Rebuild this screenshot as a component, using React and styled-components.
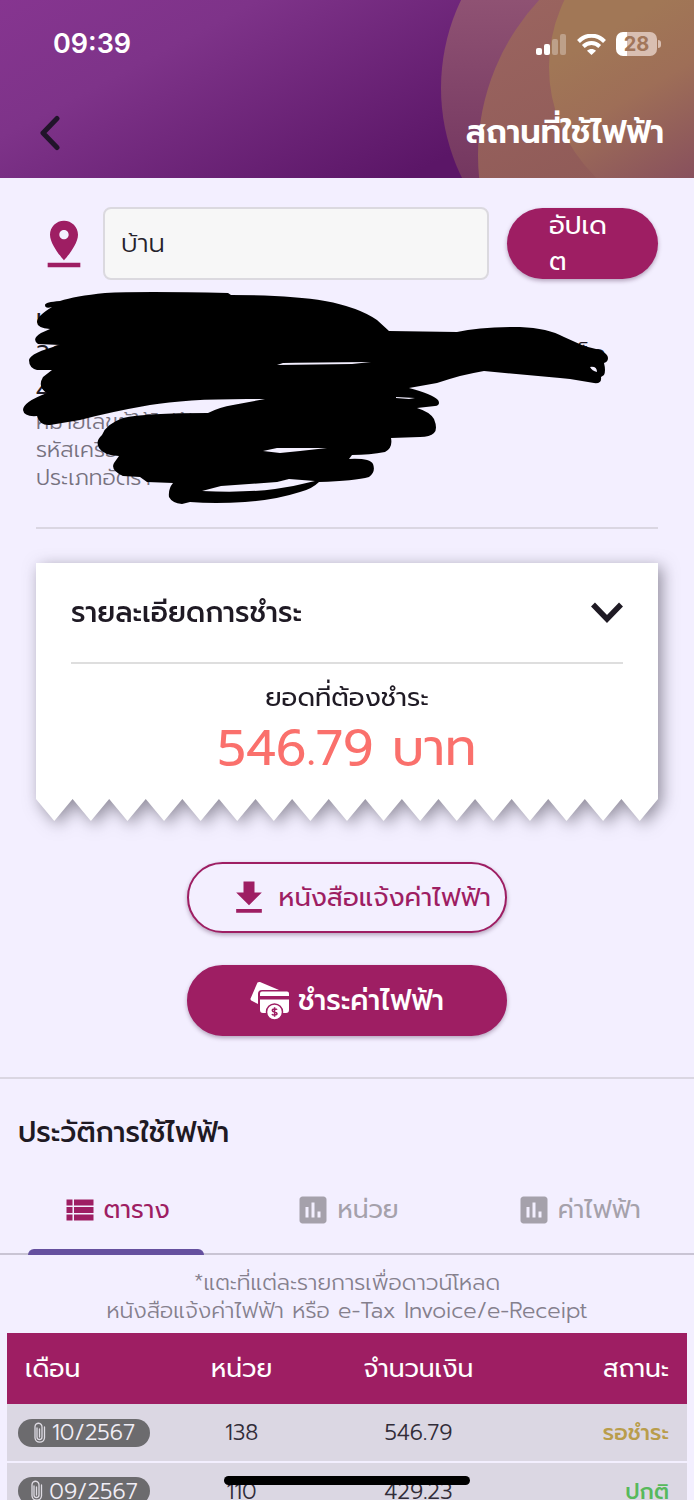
import React, { useState } from "react";
import styled, { createGlobalStyle } from "styled-components";

const plum = "#9e1e63";
const ink = "#1f1a24";

const GlobalStyle = createGlobalStyle`
  *, *::before, *::after { box-sizing: border-box; }
  body { margin: 0; background: #f3efff; }
  body, button, input, table {
    font-family: Prompt, Kanit, "Noto Sans Thai", "Noto Sans Thai Looped", "Noto Sans", "Open Sans", sans-serif;
  }
  button { border: 0; padding: 0; background: none; color: inherit; cursor: pointer; }
  h1, h2, p { margin: 0; }
`;

const Screen = styled.div`
  display: flex;
  flex-direction: column;
  height: 100vh;
  overflow-y: auto;
  scrollbar-width: none;
  color: ${ink};
  background: #f3efff;
`;

const Header = styled.header`
  position: relative;
  flex: none;
  height: 178px;
  color: #fff;
  background: linear-gradient(152deg, #863590 0%, #7e3389 25%, #5b1667 72%, #5b1667 100%);
`;

const HeaderArt = styled.svg`
  position: absolute;
  inset: 0;
  width: 100%;
  height: 100%;
`;

const StatusBar = styled.div`
  position: relative;
  display: flex;
  align-items: center;
  justify-content: space-between;
  height: 88px;
  padding: 0 33px 0 53px;
`;

const Clock = styled.time`
  font: 600 27px/32px Inter, sans-serif;
`;

const StatusIcons = styled.div`
  display: flex;
  align-items: center;
  gap: 10px;
`;

const Battery = styled.span`
  display: flex;
  align-items: center;
  gap: 1px;
`;

const BatteryBody = styled.span`
  width: 41px;
  height: 24px;
  border-radius: 7px;
  text-align: center;
  font: 700 20px/24px Inter, sans-serif;
  color: #a2765a;
  background: linear-gradient(90deg, #fff 28%, #d9bfb2 28%);
`;

const BatteryTip = styled.span`
  width: 3px;
  height: 8px;
  border-radius: 0 3px 3px 0;
  background: #d9bfb2;
`;

const TitleBar = styled.div`
  position: relative;
  display: flex;
  align-items: center;
  justify-content: space-between;
  height: 90px;
  padding: 0 30px 0 36px;
`;

const BackButton = styled.button`
  display: flex;
  color: #21142a;
`;

const Title = styled.h1`
  font-size: 32px;
  line-height: 40px;
  font-weight: 600;
`;

const Place = styled.section`
  flex: none;
  padding: 29px 36px 0;
`;

const NameForm = styled.form`
  display: flex;
  align-items: center;
  gap: 18px;
`;

const NameField = styled.label`
  display: flex;
  flex: 1;
  align-items: center;
  gap: 11px;
  min-width: 0;
  color: ${plum};
  svg { flex: none; }
`;

const NameInput = styled.input`
  flex: 1;
  min-width: 0;
  height: 73px;
  padding: 0 16px;
  border: 2px solid #dbd9df;
  border-radius: 8px;
  background: #f7f7f7;
  color: #26222b;
  font-size: 26px;
  font-weight: 300;
`;

const UpdateButton = styled.button`
  width: 151px;
  height: 71px;
  padding: 0 42px;
  border-radius: 36px;
  background: ${plum};
  color: #fff;
  font-size: 26px;
  line-height: 36px;
  text-align: left;
  box-shadow: 0 2px 4px rgba(60, 20, 60, 0.35);
`;

const Address = styled.div`
  position: relative;
  margin-top: 20px;
  padding-bottom: 35px;
  border-bottom: 2px solid #dad6e2;
`;

const AddressLine = styled.p`
  display: flex;
  justify-content: space-between;
  width: 570px;
  max-width: 100%;
  height: 36px;
  font-size: 24px;
  line-height: 36px;
  font-weight: 400;
`;

const MeterLine = styled.p`
  height: 28px;
  font-size: 22px;
  line-height: 28px;
  font-weight: 300;
  color: #77727f;
`;

const Scribble = styled.svg`
  position: absolute;
  top: -15px;
  left: -16px;
  width: 600px;
  height: 225px;
`;

const Receipt = styled.div`
  margin-top: 34px;
  filter: drop-shadow(4px 4px 8px rgba(50, 45, 60, 0.5));
`;

const ReceiptBody = styled.div`
  display: flex;
  flex-direction: column;
  height: 236px;
  padding: 0 35px;
  background: #fff;
`;

const ReceiptEdge = styled.svg`
  display: block;
  width: 100%;
  height: 22px;
  fill: #fff;
`;

const ReceiptToggle = styled.button`
  display: flex;
  align-items: center;
  justify-content: space-between;
  height: 101px;
  flex: none;
  border-bottom: 2px solid #dedede;
  font-size: 28px;
  font-weight: 500;
`;

const DueLabel = styled.p`
  padding-top: 16px;
  font-size: 26px;
  line-height: 36px;
  text-align: center;
`;

const DueAmount = styled.p`
  font-size: 50px;
  line-height: 64px;
  text-align: center;
  color: #fa706c;
`;

const Actions = styled.div`
  display: flex;
  flex: none;
  flex-direction: column;
  align-items: center;
  gap: 32px;
  padding: 41px 0;
  border-bottom: 2px solid #dad6e2;
`;

const PillButton = styled.button`
  display: flex;
  align-items: center;
  justify-content: ${(p) => (p.$outlined ? "flex-end" : "center")};
  gap: 8px;
  width: 320px;
  height: 71px;
  padding: 0 14px;
  border: 2px solid ${plum};
  border-radius: 36px;
  background: ${(p) => (p.$outlined ? "#f3efff" : plum)};
  color: ${(p) => (p.$outlined ? plum : "#fff")};
  font-size: ${(p) => (p.$outlined ? 26 : 28)}px;
  font-weight: ${(p) => (p.$outlined ? 400 : 500)};
  white-space: nowrap;
  box-shadow: 0 2px 4px rgba(60, 20, 60, 0.35);
`;

const History = styled.section`
  flex: none;
`;

const HistoryTitle = styled.h2`
  padding: 34px 18px 0;
  font-size: 28px;
  line-height: 40px;
  font-weight: 500;
`;

const Tabs = styled.div`
  display: grid;
  grid-template-columns: repeat(3, 1fr);
  margin-top: 14px;
  border-bottom: 2px solid #c9c4d4;
`;

const Tab = styled.button`
  position: relative;
  display: flex;
  align-items: center;
  justify-content: center;
  gap: 6px;
  height: 86px;
  font-size: 25px;
  color: ${(p) => (p.$active ? plum : "#a5a1ab")};
  &::after {
    content: "";
    position: absolute;
    left: 12%;
    right: 12%;
    bottom: -2px;
    height: 6px;
    border-radius: 6px 6px 0 0;
    background: ${(p) => (p.$active ? "#65509f" : "transparent")};
  }
`;

const Note = styled.p`
  padding: 14px 18px 8px;
  font-size: 22px;
  line-height: 28px;
  font-weight: 300;
  text-align: center;
  color: #85808d;
`;

const TableWrap = styled.div`
  padding: 0 7px;
`;

const Table = styled.table`
  width: 100%;
  table-layout: fixed;
  border-collapse: collapse;
  font-size: 22px;
`;

const Head = styled.th`
  width: ${(p) => p.$width};
  height: 71px;
  padding: 0 18px;
  background: ${plum};
  color: #fff;
  font-size: 25px;
  font-weight: 400;
  text-align: ${(p) => p.$align};
`;

const Cell = styled.td`
  height: 58px;
  padding: ${(p) => (p.$month ? "0 11px" : "0 18px")};
  border-bottom: 2px solid #f3efff;
  background: #dbd7e3;
  color: ${(p) => p.$color || "#322d39"};
  font-weight: ${(p) => (p.$color ? 500 : 300)};
  text-align: ${(p) => p.$align};
`;

const MonthPill = styled.button`
  display: flex;
  align-items: center;
  justify-content: center;
  gap: 6px;
  width: 132px;
  height: 28px;
  border-radius: 14px;
  background: #6c6b6e;
  color: #f0edf5;
  font-size: 22px;
  font-weight: 300;
`;

const HomeIndicator = styled.div`
  position: fixed;
  bottom: 15px;
  left: 50%;
  width: 246px;
  height: 9px;
  margin-left: -123px;
  border-radius: 5px;
  background: #000;
`;

const Icon = ({ d, size, ...rest }) => (
  <svg width={size} height={size} viewBox="0 0 24 24" fill="currentColor" aria-hidden="true" {...rest}>
    <path d={d} />
  </svg>
);

const icons = {
  pin: "M18 8c0-3.31-2.69-6-6-6S6 4.69 6 8c0 4.5 6 11 6 11s6-6.5 6-11zm-8 0c0-1.1.9-2 2-2s2 .9 2 2-.89 2-2 2c-1.1 0-2-.9-2-2zM5 20v2h14v-2H5z",
  download: "M19 9h-4V3H9v6H5l7 7 7-7zM5 18v2h14v-2H5z",
  list: "M3 9h4V5H3zm0 5h4v-4H3zm0 5h4v-4H3zm5-5h13v-4H8zm0 5h13v-4H8zM8 5v4h13V5z",
  chart: "M19 3H5c-1.1 0-2 .9-2 2v14c0 1.1.9 2 2 2h14c1.1 0 2-.9 2-2V5c0-1.1-.9-2-2-2zM9 17H7v-7h2v7zm4 0h-2V7h2v10zm4 0h-2v-4h2v4z",
};

const SignalIcon = () => (
  <svg width="31" height="21" viewBox="0 0 31 21" fill="#fff" aria-hidden="true">
    <rect x="0" y="14" width="6" height="7" rx="2" />
    <rect x="8" y="10" width="6" height="11" rx="2" />
    <rect x="16" y="5" width="6" height="16" rx="2" opacity=".3" />
    <rect x="24" y="0" width="6" height="21" rx="2" opacity=".3" />
  </svg>
);

const WifiIcon = () => (
  <svg width="29" height="21" viewBox="0 0 29 21" fill="none" stroke="#fff" strokeWidth="4" aria-hidden="true">
    <path d="M1.500 7.500C9-.3 20-.3 27.500 7.500" />
    <path d="M6.300 12.500c4.800-4.600 11.600-4.600 16.400 0" />
    <path d="M10 16.700c2.500-2.400 6.500-2.400 9 0L14.500 21z" fill="#fff" stroke="none" />
  </svg>
);

const CardsIcon = () => (
  <svg width="40" height="40" viewBox="0 0 40 40" aria-hidden="true">
    <path d="M7.500 1.500Q8.600.6 10 1L29 9H12q-4 0-4 4v10L1.200 19.500Q0 18.500.8 17z" fill="#fff" />
    <path d="M12 10.500h25q2 0 2 2V15H10v-2.500q0-2 2-2zM10 18.500h29V29q0 3-3 3H13q-3 0-3-3z" fill="#fff" />
    <circle cx="24.500" cy="31" r="8" fill="#fff" stroke={plum} strokeWidth="1.500" />
    <path d="M27 28.800c-.4-1.100-4.700-1.500-4.700.6 0 2.200 4.700.9 4.700 3.200 0 2.100-4.600 1.700-5 .4M24.600 26.200v9.600" fill="none" stroke={plum} strokeWidth="1.500" />
  </svg>
);

const ClipIcon = () => (
  <svg width="13" height="22" viewBox="0 0 13 22" fill="none" stroke="#dedbe3" strokeWidth="1.300" aria-hidden="true">
    <path d="M9 5v10a2.500 2.500 0 0 1-5 0V6M9 5a3.500 3.500 0 0 0-7-.5v11.500a4.800 4.800 0 0 0 9.500 0V5M6.500 7v8" strokeLinecap="round" />
  </svg>
);

const teeth = Array.from({ length: 17 }, (_, i) => `L${i * 20 + 10} 22L${i * 20 + 20} 0`).join("");

const rows = [
  { month: "10/2567", units: "138", amount: "546.79", status: "รอชำระ", color: "#b99d4b" },
  { month: "09/2567", units: "110", amount: "429.23", status: "ปกติ", color: "#57b95c" },
];

const tabs = [
  { id: "table", label: "ตาราง", icon: icons.list },
  { id: "units", label: "หน่วย", icon: icons.chart },
  { id: "cost", label: "ค่าไฟฟ้า", icon: icons.chart },
];

export default function App() {
  const [tab, setTab] = useState("table");
  return (
    <Screen>
      <GlobalStyle />
      <Header>
        <HeaderArt viewBox="0 0 694 178" preserveAspectRatio="xMaxYMin slice" aria-hidden="true">
          <defs>
            <linearGradient id="outer" x1="0" y1="0" x2="0" y2="178" gradientUnits="userSpaceOnUse">
              <stop offset="0" stopColor="#8f5273" />
              <stop offset="1" stopColor="#743760" />
            </linearGradient>
            <linearGradient id="middle" x1="520" y1="0" x2="600" y2="178" gradientUnits="userSpaceOnUse">
              <stop offset="0" stopColor="#9a645f" />
              <stop offset="1" stopColor="#905b58" />
            </linearGradient>
            <linearGradient id="inner" x1="610" y1="30" x2="694" y2="178" gradientUnits="userSpaceOnUse">
              <stop offset="0" stopColor="#a17756" />
              <stop offset=".4" stopColor="#9e6e57" />
              <stop offset="1" stopColor="#88505d" />
            </linearGradient>
          </defs>
          <circle cx="644" cy="88" r="203" fill="url(#outer)" />
          <circle cx="705" cy="155" r="227" fill="url(#middle)" />
          <circle cx="702" cy="67" r="153" fill="url(#inner)" />
        </HeaderArt>
        <StatusBar>
          <Clock>09:39</Clock>
          <StatusIcons>
            <SignalIcon />
            <WifiIcon />
            <Battery>
              <BatteryBody>28</BatteryBody>
              <BatteryTip />
            </Battery>
          </StatusIcons>
        </StatusBar>
        <TitleBar>
          <BackButton aria-label="ย้อนกลับ">
            <svg width="28" height="36" viewBox="0 0 28 36" fill="none" stroke="currentColor" strokeWidth="5" strokeLinecap="round" strokeLinejoin="round">
              <path d="M21 3.500 7 18l14 14.500" />
            </svg>
          </BackButton>
          <Title>สถานที่ใช้ไฟฟ้า</Title>
        </TitleBar>
      </Header>

      <Place>
        <NameForm onSubmit={(e) => e.preventDefault()}>
          <NameField>
            <Icon d={icons.pin} size={56} />
            <NameInput defaultValue="บ้าน" aria-label="ชื่อสถานที่" />
          </NameField>
          <UpdateButton>อัปเด<br />ต</UpdateButton>
        </NameForm>

        <Address>
          <AddressLine>น</AddressLine>
          <AddressLine><span>36</span><span>ร็ด</span></AddressLine>
          <AddressLine>4</AddressLine>
          <MeterLine>หมายเลขผู้ใช้ไฟฟ้า</MeterLine>
          <MeterLine>รหัสเครื่องวัดไฟฟ้า</MeterLine>
          <MeterLine>ประเภทอัตรา</MeterLine>
          <Scribble viewBox="20 285 600 225" aria-hidden="true">
            <path
              fillRule="evenodd"
              d="M45 305Q45 302 60 301Q75 296 105 293Q140 291 228 293L231 295Q290 295 325 301Q358 307 377 320L389 331L457 332Q480 327 520 327Q548 328 564 337L584 346L600 350Q608 354 608 358Q608 362 604 363Q606 371 604 375L601 377Q602 384 594 383L570 379L560 378L484 371Q464 374 437 383L409 388Q432 394 438 400Q441 405 435 406L417 408Q430 412 434 419Q438 429 434 433Q430 437 420 437L391 438Q393 448 385 452Q370 455 352 455L349 459Q370 458 373 464Q376 472 369 477Q355 481 319 482Q312 489 300 492Q275 500 245 502Q215 504 190 502L182 504Q172 503 169 497Q168 489 173 483L147 482L140 477L123 476Q110 470 114 463L119 456Q103 455 99 448Q95 441 102 435Q106 424 123 418Q145 413 208 413Q220 407 233 405L265 399Q190 398 150 405Q110 412 80 420L50 425Q40 426 37 416Q24 417 23 410Q23 402 47 393Q37 387 43 377L52 370L37 370Q29 368 29 360Q30 353 60 345L38 344Q31 339 41 333L50 329Q37 328 37 322Q37 316 52 307Q45 309 45 305Z M277 365L283 363Q335 362 371 362L352 364Z M396 397L415 398L409 399L396 398Z M590 367Q597 366 597 372Q592 371 590 367Z M202 491L221 486L277 482L289 479L315 481Q296 486 275 489Q245 493 202 491Z M263 451L277 448L327 448L300 451L280 453Z"
            />
          </Scribble>
        </Address>

        <Receipt>
          <ReceiptBody>
            <ReceiptToggle>
              รายละเอียดการชำระ
              <svg width="32" height="22" viewBox="0 0 32 22" fill="none" stroke={ink} strokeWidth="5.500" aria-hidden="true">
                <path d="M2 2.500 16 17 30 2.500" />
              </svg>
            </ReceiptToggle>
            <DueLabel>ยอดที่ต้องชำระ</DueLabel>
            <DueAmount>546.79 บาท</DueAmount>
          </ReceiptBody>
          <ReceiptEdge viewBox="0 0 340 22" preserveAspectRatio="none" aria-hidden="true">
            <path d={`M0 0${teeth}Z`} />
          </ReceiptEdge>
        </Receipt>
      </Place>

      <Actions>
        <PillButton $outlined>
          <Icon d={icons.download} size={44} />
          หนังสือแจ้งค่าไฟฟ้า
        </PillButton>
        <PillButton>
          <CardsIcon />
          ชำระค่าไฟฟ้า
        </PillButton>
      </Actions>

      <History>
        <HistoryTitle>ประวัติการใช้ไฟฟ้า</HistoryTitle>
        <Tabs role="tablist">
          {tabs.map((t) => (
            <Tab key={t.id} role="tab" aria-selected={tab === t.id} $active={tab === t.id} onClick={() => setTab(t.id)}>
              <Icon d={t.icon} size={36} />
              {t.label}
            </Tab>
          ))}
        </Tabs>
        <Note>
          *แตะที่แต่ละรายการเพื่อดาวน์โหลด
          <br />
          หนังสือแจ้งค่าไฟฟ้า หรือ e-Tax Invoice/e-Receipt
        </Note>
        <TableWrap>
          <Table>
            <thead>
              <tr>
                <Head $width="24%" $align="left">เดือน</Head>
                <Head $width="21%" $align="center">หน่วย</Head>
                <Head $width="31%" $align="center">จำนวนเงิน</Head>
                <Head $width="24%" $align="right">สถานะ</Head>
              </tr>
            </thead>
            <tbody>
              {rows.map((r) => (
                <tr key={r.month}>
                  <Cell $month $align="left">
                    <MonthPill><ClipIcon />{r.month}</MonthPill>
                  </Cell>
                  <Cell $align="center">{r.units}</Cell>
                  <Cell $align="center">{r.amount}</Cell>
                  <Cell $align="right" $color={r.color}>{r.status}</Cell>
                </tr>
              ))}
            </tbody>
          </Table>
        </TableWrap>
      </History>
      <HomeIndicator />
    </Screen>
  );
}
